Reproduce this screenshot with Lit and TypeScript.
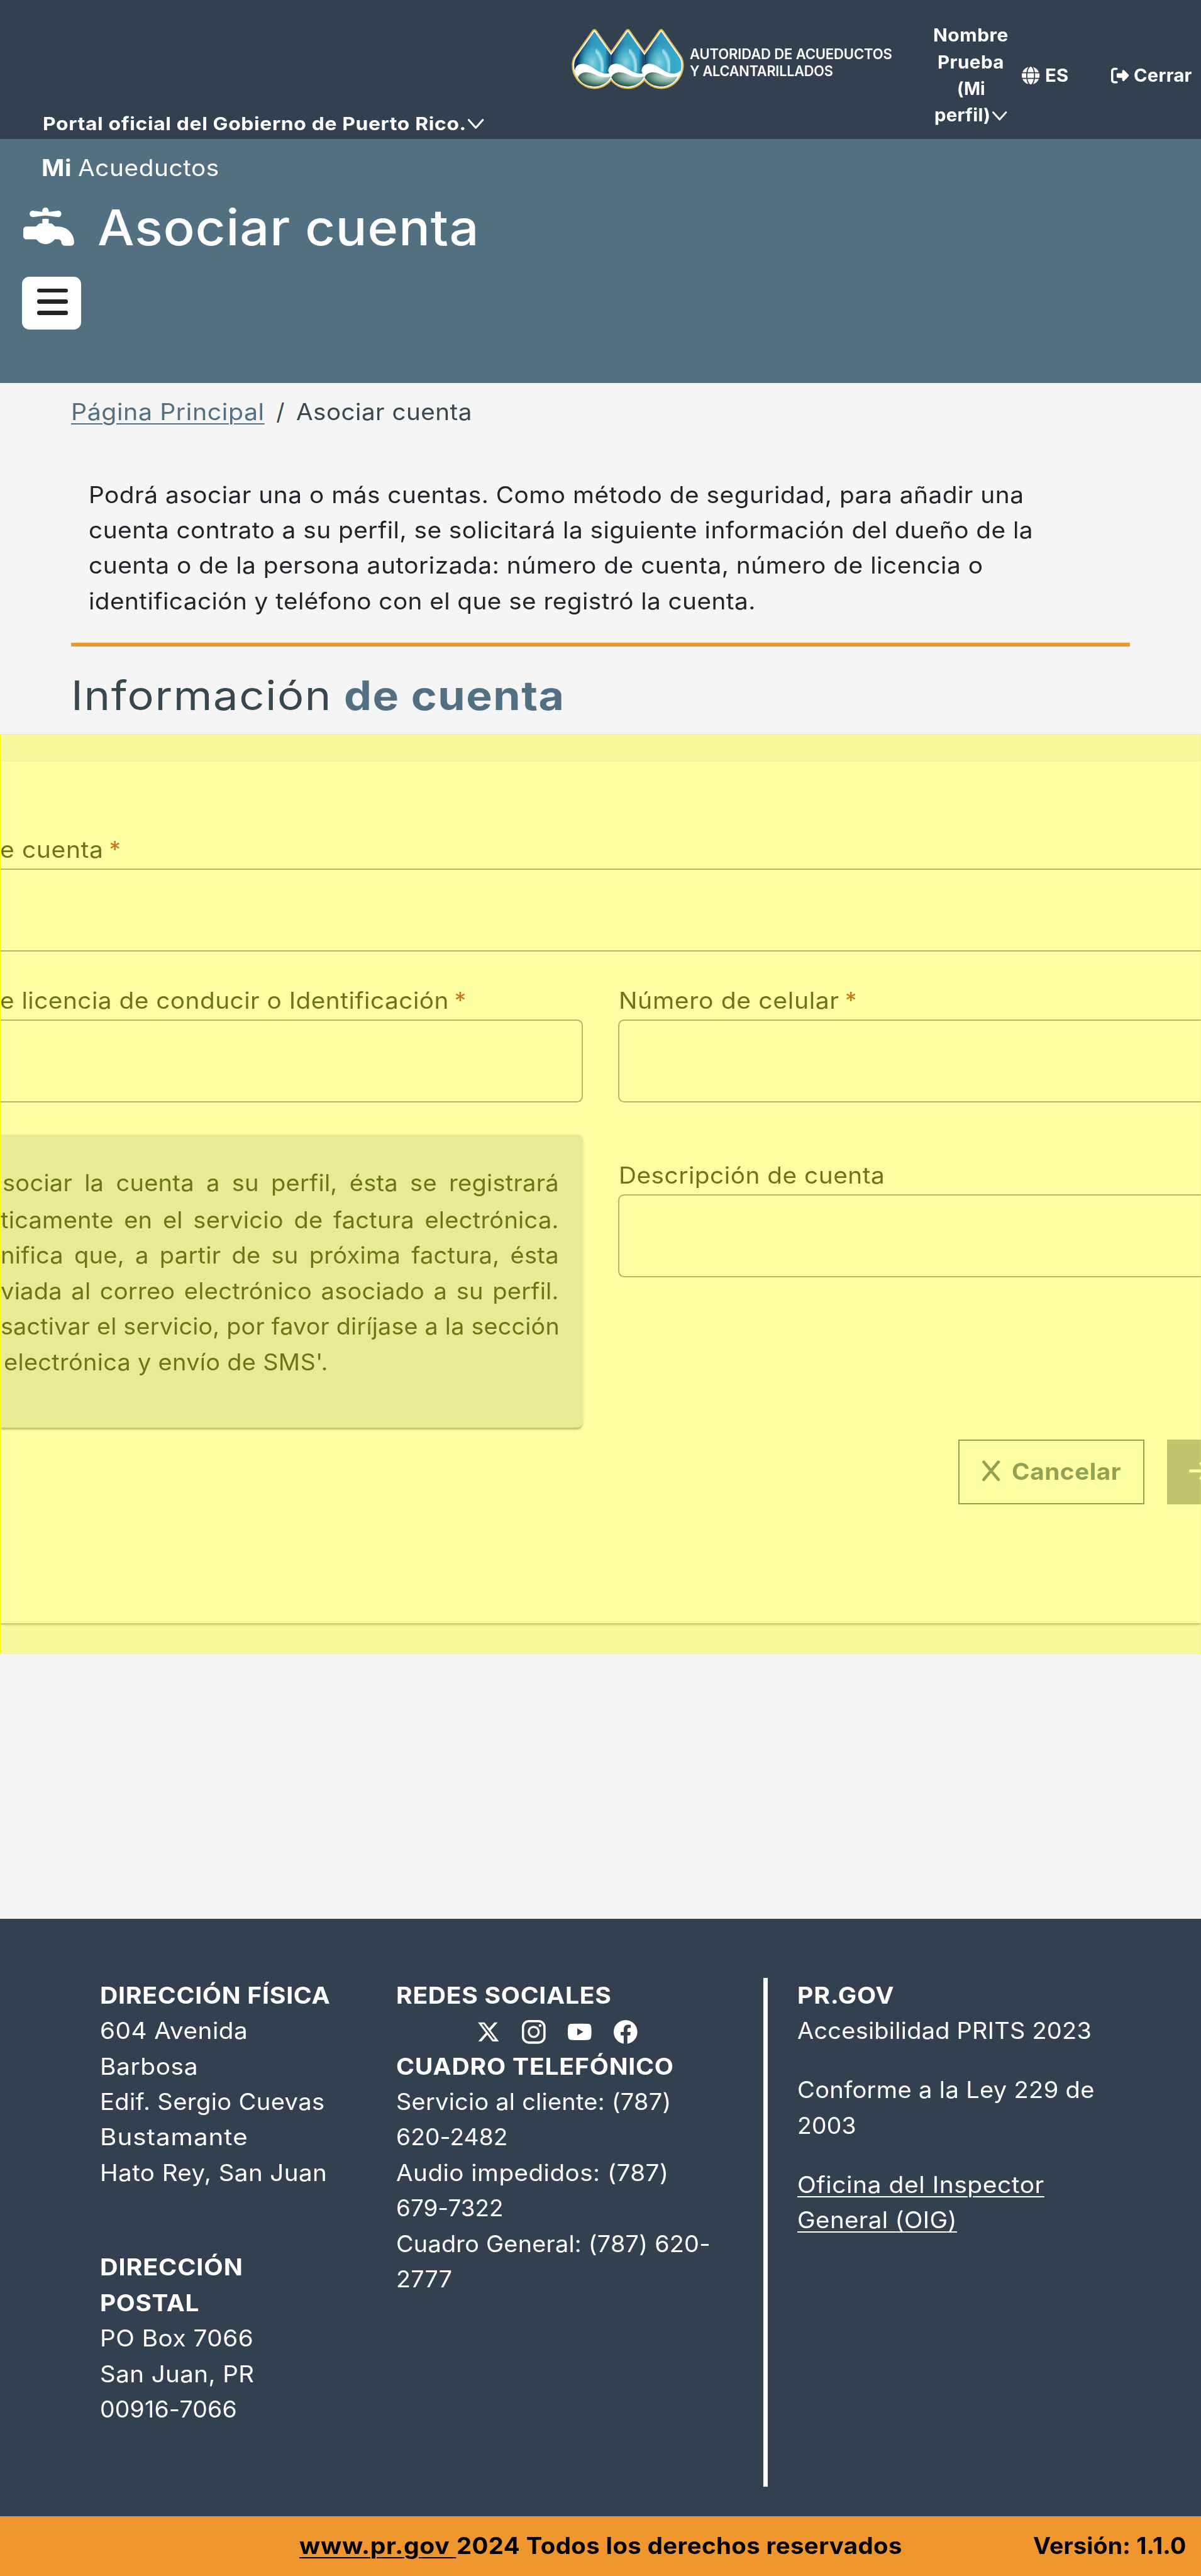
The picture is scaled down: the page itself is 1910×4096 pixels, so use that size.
import { LitElement, html, css, svg } from "lit";
import { customElement, property } from "lit/decorators.js";

/** Share of the spare width that goes to tracking; the rest widens the letters. */
const TRACKING_SHARE = 0.3;

/** One line of text that is tracked and widened so that it fills a given measure. */
@customElement("fit-text")
class FitText extends LitElement {
  @property({ type: Number }) width = 100;
  @property() text = "";

  static styles = css`
    :host { display: block; flex: none; white-space: pre; }
    .line { display: inline-block; white-space: pre; transform-origin: 0 50%; }
    :host([underlined]) .line { text-decoration: underline; text-underline-offset: 2px; text-decoration-thickness: 1px; }
  `;

  render() {
    return html`<span class="line">${this.text}</span>`;
  }

  updated() {
    const line = this.renderRoot.querySelector(".line") as HTMLElement;
    this.style.width = `${this.width}px`;
    line.style.letterSpacing = "0";
    line.style.transform = "none";
    const size = parseFloat(getComputedStyle(line).fontSize);
    const measure = () => line.getBoundingClientRect().width / this.getBoundingClientRect().width;
    const spare = this.width * (1 - measure());
    line.style.letterSpacing = `${(spare * TRACKING_SHARE) / this.text.length / size}em`;
    line.style.transform = `scaleX(${1 / measure()})`;
  }
}

const fit = (text: string, width: number, cls = "") =>
  html`<fit-text class=${cls} .text=${text} .width=${width}></fit-text>`;
const fitLink = (text: string, width: number, cls = "") =>
  html`<fit-text underlined class=${cls} .text=${text} .width=${width}></fit-text>`;

const chevron = html`<svg class="chevron" viewBox="0 0 12 8"><path d="M1 1.2 6 6.8 11 1.2" fill="none" stroke="currentColor" stroke-width="1.4" stroke-linecap="round" stroke-linejoin="round" /></svg>`;

const icon = (cls: string, box: string, d: string) =>
  html`<svg class=${cls} viewBox=${box} fill="currentColor"><path d=${d} /></svg>`;

const FAUCET = "M192 96v12L96 96c-17.7 0-32 14.3-32 32s14.3 32 32 32l96-12 31-3.9 1-.1 1 .1 31 3.9 96 12c17.7 0 32-14.3 32-32s-14.3-32-32-32l-96 12V96c0-17.7-14.3-32-32-32s-32 14.3-32 32zM32 256c-17.7 0-32 14.3-32 32v64c0 17.7 14.3 32 32 32H132.1c20.2 29 53.9 48 91.9 48s71.7-19 91.9-48H352c17.7 0 32 14.3 32 32s14.3 32 32 32h64c17.7 0 32-14.3 32-32c0-88.4-71.6-160-160-160H320l-22.6-22.6c-6-6-14.1-9.4-22.6-9.4H256V180.2l-32-4-32 4V224H173.3c-8.5 0-16.6 3.4-22.6 9.4L128 256H32z";
const GLOBE = "M352 256c0 22.2-1.2 43.6-3.3 64H163.3c-2.2-20.4-3.3-41.8-3.3-64s1.2-43.6 3.3-64H348.7c2.2 20.4 3.3 41.8 3.3 64zm28.8-64H503.9c5.3 20.5 8.1 41.9 8.1 64s-2.8 43.5-8.1 64H380.8c2.1-20.6 3.2-42 3.2-64s-1.1-43.4-3.2-64zm112.6-32H376.7c-10-63.9-29.8-117.4-55.3-151.6c78.3 20.7 142 77.5 171.9 151.6zm-149.1 0H167.7c6.1-36.4 15.5-68.6 27-94.7c10.5-23.6 22.2-40.7 33.5-51.5C239.4 3.2 248.7 0 256 0s16.6 3.2 27.8 13.8c11.3 10.8 23 27.9 33.5 51.5c11.6 26 20.9 58.2 27 94.7zm-209 0H18.6C48.6 85.9 112.2 29.1 190.6 8.4C165.1 42.6 145.3 96.1 135.3 160zM8.1 192H131.2c-2.1 20.6-3.2 42-3.2 64s1.1 43.4 3.2 64H8.1C2.8 299.5 0 278.1 0 256s2.8-43.5 8.1-64zM194.7 446.6c-11.6-26-20.9-58.2-27-94.6H344.3c-6.1 36.4-15.5 68.6-27 94.6c-10.5 23.6-22.2 40.7-33.5 51.5C272.6 508.8 263.3 512 256 512s-16.6-3.2-27.8-13.8c-11.3-10.8-23-27.9-33.5-51.5zM135.3 352c10 63.9 29.8 117.4 55.3 151.6C112.2 482.9 48.6 426.1 18.6 352H135.3zm358.1 0c-30 74.1-93.6 130.9-171.9 151.6c25.5-34.2 45.2-87.7 55.3-151.6H493.4z";
const EXIT = "M377.9 105.9L500.7 228.7c7.2 7.2 11.3 17.1 11.3 27.3s-4.1 20.1-11.3 27.3L377.9 406.1c-6.4 6.4-15 9.9-24 9.9c-18.7 0-33.9-15.2-33.9-33.9l0-62.1-128 0c-17.7 0-32-14.3-32-32l0-64c0-17.7 14.3-32 32-32l128 0 0-62.1c0-18.7 15.2-33.9 33.9-33.9c9 0 17.6 3.6 24 9.9zM160 96L96 96c-17.7 0-32 14.3-32 32l0 256c0 17.7 14.3 32 32 32l64 0c17.7 0 32 14.3 32 32s-14.3 32-32 32l-64 0c-53 0-96-43-96-96L0 128C0 75 43 32 96 32l64 0c17.7 0 32 14.3 32 32s-14.3 32-32 32z";
const CROSS = "M376.6 84.5c11.3-13.6 9.5-33.8-4.1-45.1s-33.8-9.5-45.1 4.1L192 206 56.6 43.5C45.3 29.9 25.1 28.1 11.5 39.4S-3.9 70.9 7.4 84.5L150.3 256 7.4 427.5c-11.3 13.6-9.5 33.8 4.1 45.1s33.8 9.5 45.1-4.1L192 306 327.4 468.5c11.3 13.6 31.5 15.4 45.1 4.1s15.4-31.5 4.1-45.1L233.7 256 376.6 84.5z";
const ARROW = "M438.6 278.6c12.5-12.5 12.5-32.8 0-45.3l-160-160c-12.5-12.5-32.8-12.5-45.3 0s-12.5 32.8 0 45.3L338.8 224 32 224c-17.7 0-32 14.3-32 32s14.3 32 32 32l306.7 0L233.4 393.4c-12.5 12.5-12.5 32.8 0 45.3s32.8 12.5 45.3 0l160-160z";
const X_LOGO = "M12.6.75h2.454l-5.36 6.142L16 15.25h-4.937l-3.867-5.07-4.425 5.07H.316l5.733-6.57L0 .75h5.063l3.495 4.633L12.601.75Zm-.86 13.028h1.36L4.323 2.145H2.865z";
const YOUTUBE = "M15.7 4.3a2 2 0 0 0-1.7-1.7C12.6 2.4 10 2.4 8 2.4S3.4 2.4 2 2.6A2 2 0 0 0 .3 4.3C0 6 0 7 0 8s0 2 .3 3.7A2 2 0 0 0 2 13.4C3.4 13.6 6 13.6 8 13.6s4.6 0 6-.2a2 2 0 0 0 1.7-1.7C16 10 16 9 16 8s0-2-.3-3.7ZM6.4 10.4V5.6L10.5 8Z";
const FACEBOOK = "M16 8.049c0-4.446-3.582-8.05-8-8.05C3.58 0-.002 3.603-.002 8.05c0 4.017 2.926 7.347 6.75 7.951v-5.625h-2.03V8.05H6.75V6.275c0-2.017 1.195-3.131 3.022-3.131.876 0 1.791.157 1.791.157v1.98h-1.009c-.993 0-1.303.621-1.303 1.258v1.51h2.218l-.354 2.326H9.25V16c3.824-.604 6.75-3.934 6.75-7.951";

const INNER = "M197 72 L90 224 C70 252 70 292 82 322 C102 374 148 407 197 407 C246 407 292 374 312 322 C324 292 324 252 304 224 Z";
const OFFSETS = [0, 203, 406];
const WAVE = "M60 330 L79 305 C86 268 124 262 158 276 C200 294 235 335 284 327 L298 322 L330 300 L330 430 L60 430 Z";
const LENS = "M97 352 C108 318 152 314 186 328 C220 343 252 358 296 346 C280 384 240 406 197 406 C150 406 112 385 97 352 Z";

const logo = html`
  <svg class="drops" viewBox="58 53 683 368">
    <defs>
      <linearGradient id="water" x1="0" y1="0.1" x2="1" y2="0">
        <stop offset="0.05" stop-color="#12365c" />
        <stop offset="0.42" stop-color="#2f93b8" />
        <stop offset="1" stop-color="#38b6d2" />
      </linearGradient>
      <radialGradient id="glow" cx="0.45" cy="0.56" r="0.36">
        <stop offset="0" stop-color="#8ed6df" stop-opacity="0.95" />
        <stop offset="0.55" stop-color="#4fc0d6" stop-opacity="0.7" />
        <stop offset="1" stop-color="#38b6d2" stop-opacity="0" />
      </radialGradient>
      <radialGradient id="moss" cx="0.68" cy="0.3" r="0.75">
        <stop offset="0" stop-color="#c3dfd7" />
        <stop offset="0.5" stop-color="#7fab9e" />
        <stop offset="1" stop-color="#1f4536" />
      </radialGradient>
      <linearGradient id="shade" x1="0" y1="0" x2="1" y2="0">
        <stop offset="0" stop-color="#0c2c50" stop-opacity="0" />
        <stop offset="1" stop-color="#0c2c50" stop-opacity="0.9" />
      </linearGradient>
      <filter id="soft"><feGaussianBlur stdDeviation="5" /></filter>
      <clipPath id="first"><rect x="50" y="50" width="248" height="380" /></clipPath>
      <clipPath id="middle"><rect x="95" y="50" width="203" height="380" /></clipPath>
      <clipPath id="last"><rect x="95" y="50" width="260" height="380" /></clipPath>
      <clipPath id="drop"><path d=${INNER} /></clipPath>
    </defs>
    <g fill="none" stroke="#dcb74a" stroke-width="30" stroke-linejoin="round">
      ${OFFSETS.map((x) => svg`<path d=${INNER} transform="translate(${x} 0)" />`)}
    </g>
    <g fill="#ffffff" stroke="#ffffff" stroke-width="14" stroke-linejoin="round">
      ${OFFSETS.map((x) => svg`<path d=${INNER} transform="translate(${x} 0)" />`)}
    </g>
    ${OFFSETS.map((x, i) => svg`
      <g transform="translate(${x} 0)">
        <g clip-path=${["url(#first)", "url(#middle)", "url(#last)"][i]}>
          <path d=${INNER} fill="url(#water)" />
          <path d=${INNER} fill="url(#glow)" />
          ${i < 2 ? svg`<path d="M268 165 H298 V345 H258 Z" fill="url(#shade)" clip-path="url(#drop)" />` : ""}
          <path d="M208 190 C240 225 250 262 244 312" fill="none" stroke="#c9ebf0" stroke-width="19" stroke-linecap="round" opacity="0.75" filter="url(#soft)" />
        </g>
        <path d=${WAVE} fill="#ffffff" clip-path="url(#drop)" />
        ${i > 0 ? svg`<path d="M97 335 C68 310 82 268 130 269 L140 335 Z" fill="#ffffff" />` : ""}
        <path d=${LENS} fill="url(#moss)" />
      </g>`)}
  </svg>`;

@customElement("app-root")
class AppRoot extends LitElement {
  static styles = css`
    :host {
      display: flex; flex-direction: column; zoom: 2.3522; width: 812px; height: 1741.35px; overflow: hidden;
      background: #f5f5f5; color: #212529;
      font: 400 15.6px/24px Inter, "Open Sans", sans-serif;
    }
    * { box-sizing: border-box; }
    svg { display: block; flex: none; overflow: visible; }
    .bold { font-weight: 700; }

    .top { display: flex; align-items: flex-start; height: 94px; flex: none; background: #33404f; color: #fff;
      font-size: 12px; line-height: 18px; font-weight: 700; }
    .portal { display: flex; align-items: center; align-self: flex-end; margin: 0 59px 1.2px 28.8px; gap: 0.6px; font-size: 12.4px; }
    .chevron { width: 11.6px; height: 7.6px; }
    .drops { width: 75.9px; height: 41px; margin-top: 19.2px; }
    .agency { margin: 30.6px 28px 0 3.8px; font-size: 9.6px; line-height: 11.6px; font-weight: 600; }
    .session { display: flex; align-items: center; height: 72px; margin-top: 15px; }
    .user { display: flex; flex-direction: column; align-items: center; width: 51px; margin-right: 9px; }
    .user-end { display: flex; align-items: center; gap: 1px; }
    .user-end .chevron { width: 10.8px; height: 7px; margin-top: 1px; }
    .nav-icon { width: 12px; height: 12px; margin-right: 3.6px; }
    .close { margin-left: 28.5px; }
    .nav { display: flex; align-items: center; }

    .hero { height: 165px; flex: none; background: #537082; color: #fff; padding-top: 7.6px; }
    .brand { display: flex; padding-left: 28px; gap: 4.3px; }
    .title { display: flex; align-items: center; margin: 8.4px 0 0 15.9px; gap: 15.6px; font-size: 33.4px; line-height: 40px; font-weight: 500; }
    .faucet { width: 34.4px; height: 25.8px; margin-top: -2px; }
    .menu { display: flex; flex-direction: column; justify-content: center; align-items: center; gap: 4.7px; width: 40px; height: 35.8px;
      margin: 13px 0 0 15px; padding: 0 0 2px 1px; border: 0; border-radius: 5px; background: #fff; }
    .bar { width: 21px; height: 2.8px; border-radius: 1.4px; background: #212529; }

    .intro { display: flex; flex-direction: column; height: 237.2px; flex: none; padding: 7.5px 48px 0; }
    .crumbs { display: flex; color: #3a4850; }
    .crumbs .link { color: #537082; }
    .slash { margin: 0 7.8px 0 7.9px; }
    .lead { margin: 32px 0 16.1px 12px; }
    .rule { height: 2.3px; margin: 0; border: 0; background: #ef962e; flex: none; }
    .heading { display: flex; gap: 8.2px; margin: 16.2px 0 0 0; font-size: 27.2px; line-height: 34px; color: #36474f; }
    .heading .bold { color: #537082; }

    .region { position: relative; height: 621.8px; flex: none; padding-top: 18.6px; overflow: hidden; }
    .tint { position: absolute; inset: 0; background: rgba(255, 255, 0, 0.36); border: 0.5px solid #ffff00; border-right-color: rgba(255, 255, 0, 0.3); }
    .card { height: 582.3px; padding-top: 47.8px; background: #fff;
      box-shadow: 0 2px 1px -1px rgba(0,0,0,.2), 0 1px 1px rgba(0,0,0,.14), 0 1px 3px rgba(0,0,0,.12); }
    .fields { display: grid; grid-template-columns: 394.1px 1fr; column-gap: 24px; row-gap: 21.3px; }
    .wide { grid-column: 1 / -1; }
    .label { display: flex; height: 24.7px; gap: 3.8px; }
    .field-right .label { padding-left: 0.4px; }
    .required { color: #b3261e; }
    .box { height: 56px; border: 1px solid #8d9196; background: #fff; }
    .wide .box { border-left: 0; border-right: 0; }
    .field-left .box { border-left: 0; border-radius: 0 4px 4px 0; }
    .field-right .box { border-right: 0; border-radius: 4px 0 0 4px; }
    .lower { padding-top: 16px; }
    .notice { height: 198px; margin-top: 0.5px; padding: 20.7px 0 0; border-radius: 0 4px 4px 0; background: #dce0e6;
      box-shadow: 0 2px 1px -1px rgba(0,0,0,.2), 0 1px 1px rgba(0,0,0,.14), 0 1px 3px rgba(0,0,0,.12); }
    .notice-line { width: 363.6px; transform: scaleX(1.038); transform-origin: 0 50%; margin-left: 0.3px; text-align: justify; text-align-last: justify;
      white-space: nowrap; letter-spacing: 0.006em; }
    .notice-line.first { width: 362.4px; margin: 0 0 1px 1.5px; }
    .notice .full { margin-left: 0.3px; }
    .notice .tail { margin-left: 2.6px; }
    .actions { display: flex; margin: 7.9px 0 0 648px; gap: 15px; }
    .cancel { display: flex; align-items: center; width: 125.9px; height: 44px; padding-left: 15px; gap: 8.3px; flex: none;
      border: 1px solid #537082; color: #537082; font-weight: 700; }
    .cross { width: 12px; height: 14.2px; margin-top: -1.6px; }
    .next { display: flex; align-items: center; width: 100px; height: 44px; padding-left: 15px; flex: none; background: #9fa4ad; color: #fff; }
    .arrow { width: 14px; height: 16px; margin-top: -1px; }

    .footer { display: flex; height: 404px; flex: none; margin-top: 179.1px; padding: 39.8px 0 0 67.8px; background: #33404f; color: #fff; }
    .address { width: 200.1px; flex: none; }
    .postal { margin-top: 40px; }
    .contact { width: 248.1px; flex: none; }
    .social { display: flex; align-items: center; height: 24px; padding: 1.5px 0 0 55.1px; gap: 15px; }
    .s16 { width: 16px; height: 16px; }
    .s14 { width: 14.2px; height: 13.4px; margin-right: 0.8px; }
    .divider { width: 3px; height: 344px; background: #fff; flex: none; }
    .gov { padding-left: 19.9px; }
    .spaced { margin-top: 16px; }
    .legal { display: flex; flex: 1; padding: 7.8px 0 0 202.5px; background: #ef962e; color: #000; font-weight: 700; }
    .version { margin-left: 88.6px; }
  `;

  field(cls: string, label: string, width: number, required: boolean) {
    return html`
      <div class=${cls}>
        <div class="label">${fit(label, width)}${required ? html`<span class="required">*</span>` : ""}</div>
        <div class="box"></div>
      </div>`;
  }

  render() {
    return html`
      <header class="top">
        <div class="portal">${fit("Portal oficial del Gobierno de Puerto Rico.", 286.5)}${chevron}</div>
        ${logo}
        <div class="agency">
          ${fit("AUTORIDAD DE ACUEDUCTOS", 136.8)}
          ${fit("Y ALCANTARILLADOS", 96.8)}
        </div>
        <div class="session">
          <div class="user">
            ${fit("Nombre", 51)}
            ${fit("Prueba", 45)}
            ${fit("(Mi", 19)}
            <div class="user-end">${fit("perfil)", 38)}${chevron}</div>
          </div>
          <div class="nav">${icon("nav-icon", "0 0 512 512", GLOBE)}${fit("ES", 16)}</div>
          <div class="nav close">${icon("nav-icon", "0 0 512 512", EXIT)}${fit("Cerrar", 39.4)}</div>
        </div>
      </header>

      <section class="hero">
        <div class="brand">${fit("Mi", 20.5, "bold")}${fit("Acueductos", 95.6)}</div>
        <div class="title">${icon("faucet", "0 64 512 384", FAUCET)}${fit("Asociar cuenta", 258.2)}</div>
        <button class="menu" aria-label="Menú"><span class="bar"></span><span class="bar"></span><span class="bar"></span></button>
      </section>

      <section class="intro">
        <nav class="crumbs">
          ${fitLink("Página Principal", 130.8, "link")}
          <span class="slash">/</span>
          ${fit("Asociar cuenta", 119)}
        </nav>
        <div class="lead">
          ${fit("Podrá asociar una o más cuentas. Como método de seguridad, para añadir una", 632.4)}
          ${fit("cuenta contrato a su perfil, se solicitará la siguiente información del dueño de la", 638.6)}
          ${fit("cuenta o de la persona autorizada: número de cuenta, número de licencia o", 604.8)}
          ${fit("identificación y teléfono con el que se registró la cuenta.", 451)}
        </div>
        <hr class="rule" />
        <div class="heading">${fit("Información", 176.5)}${fit("de cuenta", 149.5, "bold")}</div>
      </section>

      <section class="region">
        <div class="card">
          <div class="fields">
            ${this.field("wide", "e cuenta", 70, true)}
            ${this.field("field-left", "e licencia de conducir o Identificación", 303.5, true)}
            ${this.field("field-right", "Número de celular", 149.1, true)}
            <div class="notice">
              <div class="notice-line first">sociar la cuenta a su perfil, ésta se registrará</div>
              <div class="notice-line">ticamente en el servicio de factura electrónica.</div>
              <div class="notice-line">nifica que, a partir de su próxima factura, ésta</div>
              <div class="notice-line">viada al correo electrónico asociado a su perfil.</div>
              <div class="full">${fit("sactivar el servicio, por favor diríjase a la sección", 377.9)}</div>
              <div class="tail">${fit("electrónica y envío de SMS'.", 219.3)}</div>
            </div>
            <div class="lower">${this.field("field-right", "Descripción de cuenta", 180, false)}</div>
          </div>
          <div class="actions">
            <div class="cancel">${icon("cross", "0 32 384 448", CROSS)}${fit("Cancelar", 74)}</div>
            <div class="next">${icon("arrow", "0 0 448 512", ARROW)}</div>
          </div>
        </div>
        <div class="tint"></div>
      </section>

      <footer class="footer">
        <div class="address">
          ${fit("DIRECCIÓN FÍSICA", 155.8, "bold")}
          ${fit("604 Avenida", 100)}
          ${fit("Barbosa", 66.4)}
          ${fit("Edif. Sergio Cuevas", 152)}
          ${fit("Bustamante", 100.2)}
          ${fit("Hato Rey, San Juan", 153.6)}
          <div class="postal">
            ${fit("DIRECCIÓN", 96.8, "bold")}
            ${fit("POSTAL", 67.2, "bold")}
            ${fit("PO Box 7066", 103.8)}
            ${fit("San Juan, PR", 104.4)}
            ${fit("00916-7066", 92.6)}
          </div>
        </div>
        <div class="contact">
          ${fit("REDES SOCIALES", 145.6, "bold")}
          <div class="social">
            ${icon("s14", "0 0.75 16 14.5", X_LOGO)}
            <svg class="s16" viewBox="0 0 16 16" fill="none" stroke="currentColor">
              <rect x="0.75" y="0.75" width="14.5" height="14.5" rx="4" stroke-width="1.5" />
              <circle cx="8" cy="8" r="3.4" stroke-width="1.4" />
              <circle cx="12.3" cy="3.75" r="0.96" fill="currentColor" stroke="none" />
            </svg>
            ${icon("s16", "0 0 16 16", YOUTUBE)}
            ${icon("s16", "0 0 16 16", FACEBOOK)}
          </div>
          ${fit("CUADRO TELEFÓNICO", 187.8, "bold")}
          ${fit("Servicio al cliente: (787)", 186)}
          ${fit("620-2482", 75.5)}
          ${fit("Audio impedidos: (787)", 184.3)}
          ${fit("679-7322", 72.5)}
          ${fit("Cuadro General: (787) 620-", 212.5)}
          ${fit("2777", 38)}
        </div>
        <div class="divider"></div>
        <div class="gov">
          ${fit("PR.GOV", 65.6, "bold")}
          ${fit("Accesibilidad PRITS 2023", 199)}
          <div class="spaced">
            ${fit("Conforme a la Ley 229 de", 201)}
            ${fit("2003", 39.8)}
          </div>
          <div class="spaced">
            ${fitLink("Oficina del Inspector", 167)}
            ${fitLink("General (OIG)", 108)}
          </div>
        </div>
      </footer>

      <div class="legal">
        ${fitLink("www.pr.gov ", 106)}
        ${fit("2024 Todos los derechos reservados", 301.4)}
        ${fit("Versión: 1.1.0", 103.5, "version")}
      </div>
    `;
  }
}
